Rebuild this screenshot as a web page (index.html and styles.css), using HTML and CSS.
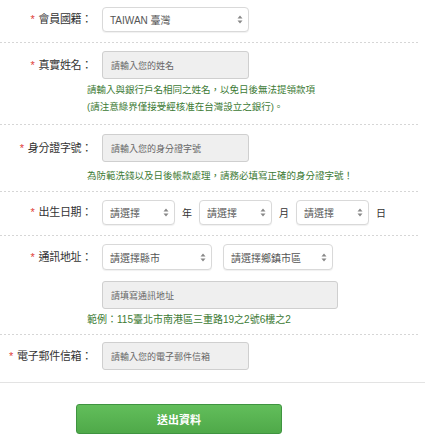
FILE: index.html
```html
<!DOCTYPE html>
<html lang="zh-Hant">
<head>
<meta charset="utf-8">
<title>會員資料</title>
<link rel="stylesheet" href="styles.css">
</head>
<body>
<form class="form">
  <div class="row row-1">
    <div class="label"><span class="star">*</span>會員國籍：</div>
    <div class="controls">
      <div class="select w-nation"><span class="val">TAIWAN 臺灣</span><svg class="arrows" width="6" height="9" viewBox="0 0 6 9"><path d="M3 0.5 L5.5 3.5 H0.5 Z M3 8.5 L5.5 5.5 H0.5 Z" fill="#888"/></svg></div>
    </div>
  </div>

  <div class="row row-2">
    <div class="label label-input"><span class="star">*</span>真實姓名：</div>
    <div class="controls">
      <div class="input w-std">請輸入您的姓名</div>
      <div class="help help-2">請輸入與銀行戶名相同之姓名，以免日後無法提領款項<br>(請注意綠界僅接受經核准在台灣設立之銀行)。</div>
    </div>
  </div>

  <div class="row row-3">
    <div class="label label-input"><span class="star">*</span>身分證字號：</div>
    <div class="controls">
      <div class="input w-std">請輸入您的身分證字號</div>
      <div class="help help-3">為防範洗錢以及日後帳款處理，請務必填寫正確的身分證字號！</div>
    </div>
  </div>

  <div class="row row-4">
    <div class="label"><span class="star">*</span>出生日期：</div>
    <div class="controls date">
      <div class="select w-date"><span class="val">請選擇</span><svg class="arrows" width="6" height="9" viewBox="0 0 6 9"><path d="M3 0.5 L5.5 3.5 H0.5 Z M3 8.5 L5.5 5.5 H0.5 Z" fill="#888"/></svg></div>
      <span class="unit">年</span>
      <div class="select w-date"><span class="val">請選擇</span><svg class="arrows" width="6" height="9" viewBox="0 0 6 9"><path d="M3 0.5 L5.5 3.5 H0.5 Z M3 8.5 L5.5 5.5 H0.5 Z" fill="#888"/></svg></div>
      <span class="unit">月</span>
      <div class="select w-date"><span class="val">請選擇</span><svg class="arrows" width="6" height="9" viewBox="0 0 6 9"><path d="M3 0.5 L5.5 3.5 H0.5 Z M3 8.5 L5.5 5.5 H0.5 Z" fill="#888"/></svg></div>
      <span class="unit">日</span>
    </div>
  </div>

  <div class="row row-5">
    <div class="label label-addr"><span class="star">*</span>通訊地址：</div>
    <div class="controls">
      <div class="addr-selects">
        <div class="select w-city"><span class="val">請選擇縣市</span><svg class="arrows" width="6" height="9" viewBox="0 0 6 9"><path d="M3 0.5 L5.5 3.5 H0.5 Z M3 8.5 L5.5 5.5 H0.5 Z" fill="#888"/></svg></div>
        <div class="select w-city"><span class="val">請選擇鄉鎮市區</span><svg class="arrows" width="6" height="9" viewBox="0 0 6 9"><path d="M3 0.5 L5.5 3.5 H0.5 Z M3 8.5 L5.5 5.5 H0.5 Z" fill="#888"/></svg></div>
      </div>
      <div class="input w-addr">請填寫通訊地址</div>
      <div class="help help-5">範例：115臺北市南港區三重路19之2號6樓之2</div>
    </div>
  </div>

  <div class="row row-6">
    <div class="label label-input"><span class="star">*</span>電子郵件信箱：</div>
    <div class="controls">
      <div class="input w-std">請輸入您的電子郵件信箱</div>
    </div>
  </div>

  <div class="actions">
    <button type="button" class="btn">送出資料</button>
  </div>
</form>
</body>
</html>
```

FILE: styles.css
```css
* { box-sizing: border-box; }

html, body {
  margin: 0;
  padding: 0;
  background: #fff;
}

body {
  font-family: "Liberation Sans", "Noto Sans CJK TC", sans-serif;
  color: #333;
  width: 425px;
}

.form {
  display: flex;
  flex-direction: column;
}

.row {
  display: flex;
  gap: 10px;
  margin-right: 7px;
  background-image: linear-gradient(to right, #d6d6d6 50%, transparent 50%);
  background-size: 4px 1px;
  background-repeat: repeat-x;
  background-position: left bottom;
}

.row-1 { padding: 7px 0 11px; }
.row-2 { padding: 8px 0 10px; }
.row-3 { padding: 9px 0 8px; }
.row-4 { padding: 8px 0 11px; }
.row-5 { padding: 8px 0 7px; }
.row-6 {
  padding: 7px 0 12px;
  margin-right: 0;
  background-image: none;
  border-bottom: 1px solid #e3e3e3;
}

.label {
  width: 92px;
  flex: none;
  text-align: right;
  font-size: 11px;
  line-height: 25px;
  height: 25px;
  color: #333;
  white-space: nowrap;
  letter-spacing: -0.3px;
}

.label-input { line-height: 28px; height: 28px; }
.label-addr { line-height: 26px; height: 26px; }

.star {
  color: #e0403a;
  margin-right: 4px;
}

.controls {
  display: flex;
  flex-direction: column;
  align-items: flex-start;
}

.select {
  height: 25px;
  display: flex;
  align-items: center;
  justify-content: space-between;
  padding: 0 5px 0 7px;
  background: #fff;
  border: 1px solid #d9d9d9;
  border-radius: 4px;
  box-shadow: 0 1px 1px rgba(0,0,0,0.06);
  font-size: 10px;
  color: #555;
}

.select .val { white-space: nowrap; }
.arrows { flex: none; }

.w-nation { width: 147px; }
.w-date { width: 73px; }
.w-city { width: 110px; height: 26px; }

.input {
  height: 28px;
  display: flex;
  align-items: center;
  padding: 0 8px;
  background: #efefef;
  border: 1px solid #cfcfcf;
  border-radius: 3px;
  font-size: 9px;
  color: #666;
  white-space: nowrap;
}

.w-std { width: 147px; }
.w-addr { width: 236px; margin-top: 11px; }

.help {
  font-size: 9.5px;
  line-height: 17px;
  color: #3c7a34;
  margin-left: -15px;
  white-space: nowrap;
}

.help-2 { margin-top: 2px; }
.help-3 { margin-top: 5px; }
.help-5 { margin-top: 2px; font-size: 10px; }

.date {
  flex-direction: row;
  align-items: center;
  gap: 7px;
}

.unit {
  font-size: 10px;
  color: #333;
}

.addr-selects {
  display: flex;
  gap: 11px;
}

.actions {
  display: flex;
  padding: 21px 0 0 76px;
}

.btn {
  width: 206px;
  height: 30px;
  border: 1px solid #3f9440;
  border-radius: 3px;
  background: linear-gradient(to bottom, #62be5b, #4fa949);
  color: #fff;
  font-family: "Liberation Sans", "Noto Sans CJK TC", sans-serif;
  font-size: 11px;
  font-weight: bold;
  padding: 0;
}
```
